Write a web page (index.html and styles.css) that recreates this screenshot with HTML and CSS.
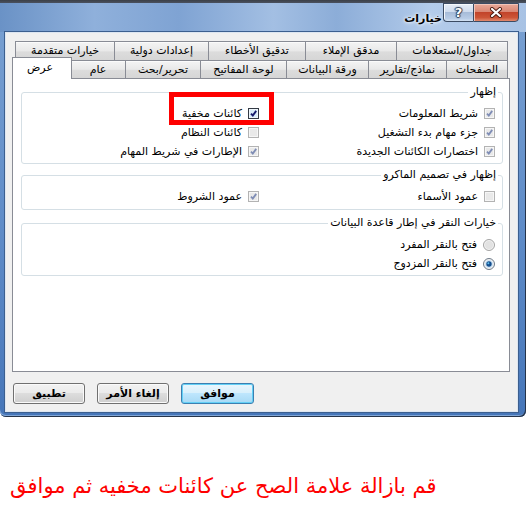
FILE: index.html
```html
<!DOCTYPE html>
<html lang="ar">
<head>
<meta charset="utf-8">
<title>خيارات</title>
<link rel="stylesheet" href="styles.css">
</head>
<body>
<div class="window">
  <div class="titlebar">
    <span class="title">خيارات</span>
    <div class="capbtns">
      <span class="cap help">?</span>
      <span class="cap close"><svg width="14" height="11" viewBox="0 0 14 11"><path class="x-out" d="M3 2l8 7M11 2l-8 7"/><path class="x-in" d="M3 2l8 7M11 2l-8 7"/></svg></span>
    </div>
  </div>
  <div class="client" dir="rtl">
    <div class="tabs">
      <div class="tabrow back">
        <div class="tab first w112">جداول/استعلامات</div>
        <div class="tab w91">مدقق الإملاء</div>
        <div class="tab w97">تدقيق الأخطاء</div>
        <div class="tab w94">إعدادات دولية</div>
        <div class="tab w99">خيارات متقدمة</div>
      </div>
      <div class="tabrow front">
        <div class="tab first w62">الصفحات</div>
        <div class="tab w78">نماذج/تقارير</div>
        <div class="tab w82">ورقة البيانات</div>
        <div class="tab w86">لوحة المفاتيح</div>
        <div class="tab w75">تحرير/بحث</div>
        <div class="tab w55">عام</div>
        <div class="tab sel">عرض</div>
      </div>
    </div>
    <div class="panel">
      <div class="group g1">
        <div class="legend">إظهار</div>
        <div class="opts">
          <label class="opt"><svg class="cb dis" viewBox="0 0 11 11"><rect class="cb-o" x=".5" y=".5" width="10" height="10"/><rect class="cb-i" x="2" y="2" width="7" height="7"/><path class="cb-m" d="M3 5.6l1.8 1.9 3.4-4.6"/></svg><span>شريط المعلومات</span></label>
          <label class="opt mark"><svg class="cb on" viewBox="0 0 11 11"><rect class="cb-o" x=".5" y=".5" width="10" height="10"/><rect class="cb-i" x="2" y="2" width="7" height="7"/><path class="cb-m" d="M3 5.6l1.8 1.9 3.4-4.6"/></svg><span>كائنات مخفية</span><span class="redbox"></span></label>
          <label class="opt"><svg class="cb dis" viewBox="0 0 11 11"><rect class="cb-o" x=".5" y=".5" width="10" height="10"/><rect class="cb-i" x="2" y="2" width="7" height="7"/><path class="cb-m" d="M3 5.6l1.8 1.9 3.4-4.6"/></svg><span>جزء مهام بدء التشغيل</span></label>
          <label class="opt"><svg class="cb dis" viewBox="0 0 11 11"><rect class="cb-o" x=".5" y=".5" width="10" height="10"/><rect class="cb-i" x="2" y="2" width="7" height="7"/></svg><span>كائنات النظام</span></label>
          <label class="opt"><svg class="cb dis" viewBox="0 0 11 11"><rect class="cb-o" x=".5" y=".5" width="10" height="10"/><rect class="cb-i" x="2" y="2" width="7" height="7"/><path class="cb-m" d="M3 5.6l1.8 1.9 3.4-4.6"/></svg><span>اختصارات الكائنات الجديدة</span></label>
          <label class="opt"><svg class="cb dis" viewBox="0 0 11 11"><rect class="cb-o" x=".5" y=".5" width="10" height="10"/><rect class="cb-i" x="2" y="2" width="7" height="7"/><path class="cb-m" d="M3 5.6l1.8 1.9 3.4-4.6"/></svg><span>الإطارات في شريط المهام</span></label>
        </div>
      </div>
      <div class="group g2">
        <div class="legend">إظهار في تصميم الماكرو</div>
        <div class="opts">
          <label class="opt"><svg class="cb dis" viewBox="0 0 11 11"><rect class="cb-o" x=".5" y=".5" width="10" height="10"/><rect class="cb-i" x="2" y="2" width="7" height="7"/></svg><span>عمود الأسماء</span></label>
          <label class="opt"><svg class="cb dis" viewBox="0 0 11 11"><rect class="cb-o" x=".5" y=".5" width="10" height="10"/><rect class="cb-i" x="2" y="2" width="7" height="7"/><path class="cb-m" d="M3 5.6l1.8 1.9 3.4-4.6"/></svg><span>عمود الشروط</span></label>
        </div>
      </div>
      <div class="group g3">
        <div class="legend">خيارات النقر في إطار قاعدة البيانات</div>
        <div class="radios">
          <label class="opt"><svg class="rb" viewBox="0 0 12 12"><circle class="rb-o" cx="6" cy="6" r="5.5"/><circle class="rb-i" cx="6" cy="6" r="4"/></svg><span>فتح بالنقر المفرد</span></label>
          <label class="opt"><svg class="rb sel" viewBox="0 0 12 12"><circle class="rb-o" cx="6" cy="6" r="5.5"/><circle class="rb-i" cx="6" cy="6" r="4"/><circle class="rb-d" cx="6" cy="6" r="2.7"/><circle class="rb-h" cx="5.4" cy="5.3" r="1"/></svg><span>فتح بالنقر المزدوج</span></label>
        </div>
      </div>
    </div>
    <div class="buttons">
      <button class="btn default w73">موافق</button>
      <button class="btn">إلغاء الأمر</button>
      <button class="btn">تطبيق</button>
    </div>
  </div>
</div>
<div class="note"><span dir="rtl">قم بازالة علامة الصح عن كائنات مخفيه ثم موافق</span></div>
</body>
</html>
```
FILE: styles.css
```css
html, body {
  margin: 0;
  padding: 0;
  background: #fff;
}
body {
  width: 531px;
  height: 514px;
  overflow: hidden;
  font-family: "DejaVu Sans", sans-serif;
  font-size: 11px;
  color: #000;
}

/* ---------- window frame ---------- */
.window {
  width: 526px;
  height: 417px;
  display: flex;
  flex-direction: column;
  border-radius: 0 0 6px 6px;
  background: linear-gradient(#7aa1d2, #5f8cc8 55%, #4676b9);
  box-shadow: inset -1px -1px 0 #26344a, inset 0 -2px 0 #7fa5d6;
}
.titlebar {
  height: 32px;
  flex: none;
  display: flex;
  justify-content: flex-end;
  align-items: flex-start;
  background:
    linear-gradient(#3b4047, #4a5160 3px, transparent 3px),
    linear-gradient(90deg, #6a92c6 0%, #8fb0db 18%, #7fa3d3 34%, #a3bfe3 52%, #8cadd8 64%, #b3cbea 82%, #a8c2e4 100%);
}
.title {
  margin-top: 12px;
  margin-right: 1px;
  font-size: 11px;
  font-weight: bold;
  line-height: 14px;
  text-shadow: 0 0 3px #fff, 0 0 5px #eef4fb;
}
.capbtns {
  display: flex;
  margin-top: 3px;
  margin-right: 7px;
}
.cap {
  height: 19px;
  box-sizing: border-box;
  border: 1px solid #3b4b63;
  display: flex;
  align-items: center;
  justify-content: center;
}
.help {
  width: 30px;
  border-right: none;
  border-radius: 0 0 0 4px;
  background: linear-gradient(#e6edf7, #cfdcee 45%, #a7bcd9 50%, #b8cce6 85%, #d3e2f3);
  box-shadow: inset 1px 1px 0 #f4f8fc;
  color: #fff;
  font-weight: bold;
  font-size: 13px;
  text-shadow: 0 0 1px #2b3d58, 1px 0 1px #2b3d58, -1px 0 1px #2b3d58, 0 1px 1px #2b3d58, 0 -1px 1px #2b3d58;
}
.close {
  width: 46px;
  border-radius: 0 0 4px 0;
  background: linear-gradient(#e8aa9a, #d98774 45%, #c2442a 50%, #cc5537 80%, #e28a6f);
  box-shadow: inset 1px 1px 0 #f0c4b8;
}
.x-out { stroke: #4a1a10; stroke-width: 4; stroke-linecap: round; fill: none; }
.x-in { stroke: #fff; stroke-width: 2.2; stroke-linecap: round; fill: none; }

/* ---------- client area ---------- */
.client {
  height: 380px;
  box-sizing: border-box;
  margin: 0 8px 0 5px;
  background: #f0f0f0;
  border: 1px solid #dde6f1;
  box-shadow: 0 0 0 1px #3c5f8f;
  padding: 8px 7px 0 6px;
  display: flex;
  flex-direction: column;
}

/* tabs */
.tabs {
  display: flex;
  flex-direction: column;
  margin-right: 2px;
}
.tabrow {
  display: flex;
}
.back { height: 19px; }
.front { height: 18px; }
.tab {
  box-sizing: border-box;
  border-top: 1px solid #898c95;
  border-left: 1px solid #898c95;
  background: linear-gradient(#f4f4f4, #e9e9e9 48%, #dcdcdc 56%, #d6d6d6);
  box-shadow: inset 0 1px 0 #fbfbfb;
  text-align: center;
  white-space: nowrap;
  overflow: hidden;
}
.tab.first { border-right: 1px solid #898c95; }
.back .tab { line-height: 18px; }
.front .tab { line-height: 17px; }
.w112 { width: 112px; }
.w91 { width: 91px; }
.w97 { width: 97px; }
.w94 { width: 94px; }
.w99 { width: 99px; }
.w62 { width: 62px; }
.w78 { width: 78px; }
.w82 { width: 82px; }
.w86 { width: 86px; }
.w75 { width: 75px; }
.w55 { width: 55px; }
.tab.sel {
  width: 60px;
  height: 22px;
  margin: -3px -2px 0 -2px;
  position: relative;
  z-index: 1;
  border-right: 1px solid #898c95;
  background: #fff;
  box-shadow: none;
  line-height: 19px;
  text-indent: 4px;
}

/* panel */
.panel {
  flex: 1;
  background: #fff;
  border: 1px solid #898c95;
  padding: 13px 6px 0 8px;
}
.group {
  border: 1px solid #d5dfe5;
  border-radius: 3px;
  padding: 0 7px 2px 7px;
}
.g2 { margin-top: 11px; padding-bottom: 3px; }
.g3 { margin-top: 13px; }
.legend {
  width: fit-content;
  margin: -8px -3px 5px 0;
  padding: 0 2px;
  background: #fff;
  line-height: 14px;
  white-space: nowrap;
}
.opts {
  display: grid;
  grid-template-columns: 236px 236px;
}
.radios {
  display: grid;
  grid-template-columns: 236px;
}
.opt {
  display: flex;
  align-items: center;
  gap: 6px;
  height: 19px;
  white-space: nowrap;
}
.mark { position: relative; }
.redbox {
  position: absolute;
  right: -15px;
  top: -12px;
  width: 105px;
  height: 33px;
  box-sizing: border-box;
  border: 5px solid #fe0000;
}

/* checkboxes */
.cb { width: 11px; height: 11px; flex: none; }
.cb-o { fill: #f6f6f6; stroke: #b3b3b3; }
.cb-i { fill: #e9e9e9; }
.cb-m { fill: none; stroke: #7f8db5; stroke-width: 1.8; }
.cb.on .cb-o { fill: #eef6fc; stroke: #333a44; }
.cb.on .cb-i { fill: #d9ecf9; }
.cb.on .cb-m { stroke: #161a6c; stroke-width: 1.9; }

/* radios */
.rb { width: 12px; height: 12px; flex: none; }
.rb-o { fill: #f3f3f3; stroke: #a3a3a3; }
.rb-i { fill: #e2e2e2; }
.rb.sel .rb-o { stroke: #6e7a88; }
.rb.sel .rb-i { fill: #cfe3f4; }
.rb-d { fill: #144f8f; }
.rb-h { fill: #5fc0ee; }

/* buttons */
.buttons {
  display: flex;
  justify-content: flex-end;
  gap: 12px;
  margin: 11px 0 7px 1px;
}
.btn {
  width: 72px;
  height: 21px;
  box-sizing: border-box;
  padding: 0;
  border: 1px solid #707070;
  border-radius: 3px;
  background: linear-gradient(#f2f2f2, #ebebeb 45%, #dddddd 50%, #cfcfcf);
  box-shadow: inset 0 0 0 1px #fafafa;
  font-family: "DejaVu Sans", sans-serif;
  font-size: 11px;
  font-weight: bold;
  color: #000;
}
.btn.w73 { width: 73px; }
.btn.default {
  border-color: #3c7fb1;
  background: linear-gradient(#eaf6fd, #d9f0fc 45%, #bee6fd 50%, #a7d9f5);
  box-shadow: inset 0 0 0 1px #63d0f6;
}

/* caption text */
.note {
  margin-top: 55px;
  padding-left: 10px;
  font-size: 21px;
  line-height: 28px;
  color: #fe0000;
  white-space: nowrap;
}
```
